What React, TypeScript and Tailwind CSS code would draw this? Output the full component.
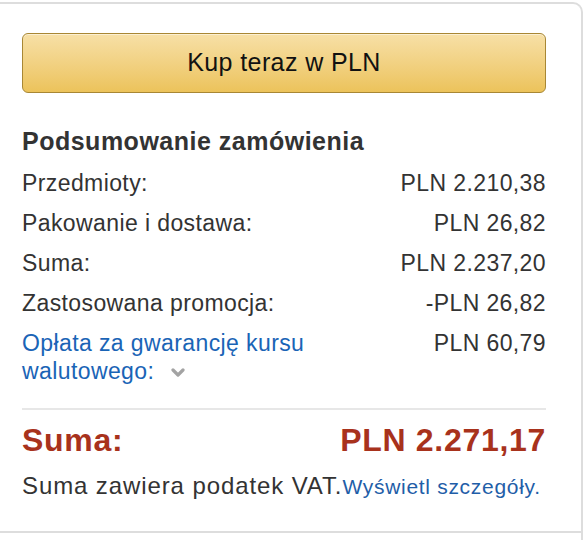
const rows = [
  { label: "Przedmioty:", value: "PLN 2.210,38" },
  { label: "Pakowanie i dostawa:", value: "PLN 26,82" },
  { label: "Suma:", value: "PLN 2.237,20" },
  { label: "Zastosowana promocja:", value: "-PLN 26,82" },
];

function Chevron() {
  return (
    <svg width="14" height="10" viewBox="0 0 14 10" className="ml-[17px] inline-block align-middle" aria-hidden>
      <path d="M2 2 L7 7 L12 2" fill="none" stroke="#a3a3a3" strokeWidth="3.2" strokeLinecap="round" strokeLinejoin="round" />
    </svg>
  );
}

export default function App() {
  return (
    <div className="h-[540px] overflow-hidden bg-white pt-[2px] font-['Liberation_Sans',Arial,sans-serif] text-[#333]">
      <div className="min-h-[600px] w-[583px] rounded-tr-[10px] border-t-2 border-r-2 border-[#dddddd]">
        <div className="border-b-2 border-[#dddddd] pb-[30px] pl-[22px] pr-[35px] pt-[29px]">
          <button className="flex h-[60px] w-full items-center justify-center rounded-[6px] border border-[#a88734] bg-gradient-to-b from-[#f7e0a6] to-[#ecc35a] text-[25px] tracking-[0.4px] text-[#111] shadow-[inset_0_1px_0_rgba(255,255,255,0.5)]">
            Kup teraz w PLN
          </button>

          <h2 className="mt-[33px] text-[25px] font-bold leading-[30px] tracking-[0.5px] text-[#333]">
            Podsumowanie zamówienia
          </h2>

          <div className="mt-[13px] flex flex-col gap-[12px] text-[23px] leading-[28px] tracking-[0.4px]">
            {rows.map((r) => (
              <div key={r.label} className="flex justify-between">
                <span>{r.label}</span>
                <span>{r.value}</span>
              </div>
            ))}
            <div className="flex justify-between">
              <span className="w-[330px] text-[#1a64b6]">
                Opłata za gwarancję kursu walutowego:
                <Chevron />
              </span>
              <span>PLN 60,79</span>
            </div>
          </div>

          <div className="mt-[23px] h-[2px] bg-[#e7e7e7]" />

          <div className="mt-[12px] flex justify-between text-[32px] font-bold leading-[36px] tracking-[0.7px] text-[#a8321c]">
            <span>Suma:</span>
            <span>PLN 2.271,17</span>
          </div>

          <p className="mt-[14px] text-[24px] leading-[28px] tracking-[0.9px]">
            Suma zawiera podatek VAT.
            <a href="#" className="text-[21px] tracking-[0.7px] text-[#1f5ea8]">
              Wyświetl szczegóły.
            </a>
          </p>
        </div>
      </div>
    </div>
  );
}
